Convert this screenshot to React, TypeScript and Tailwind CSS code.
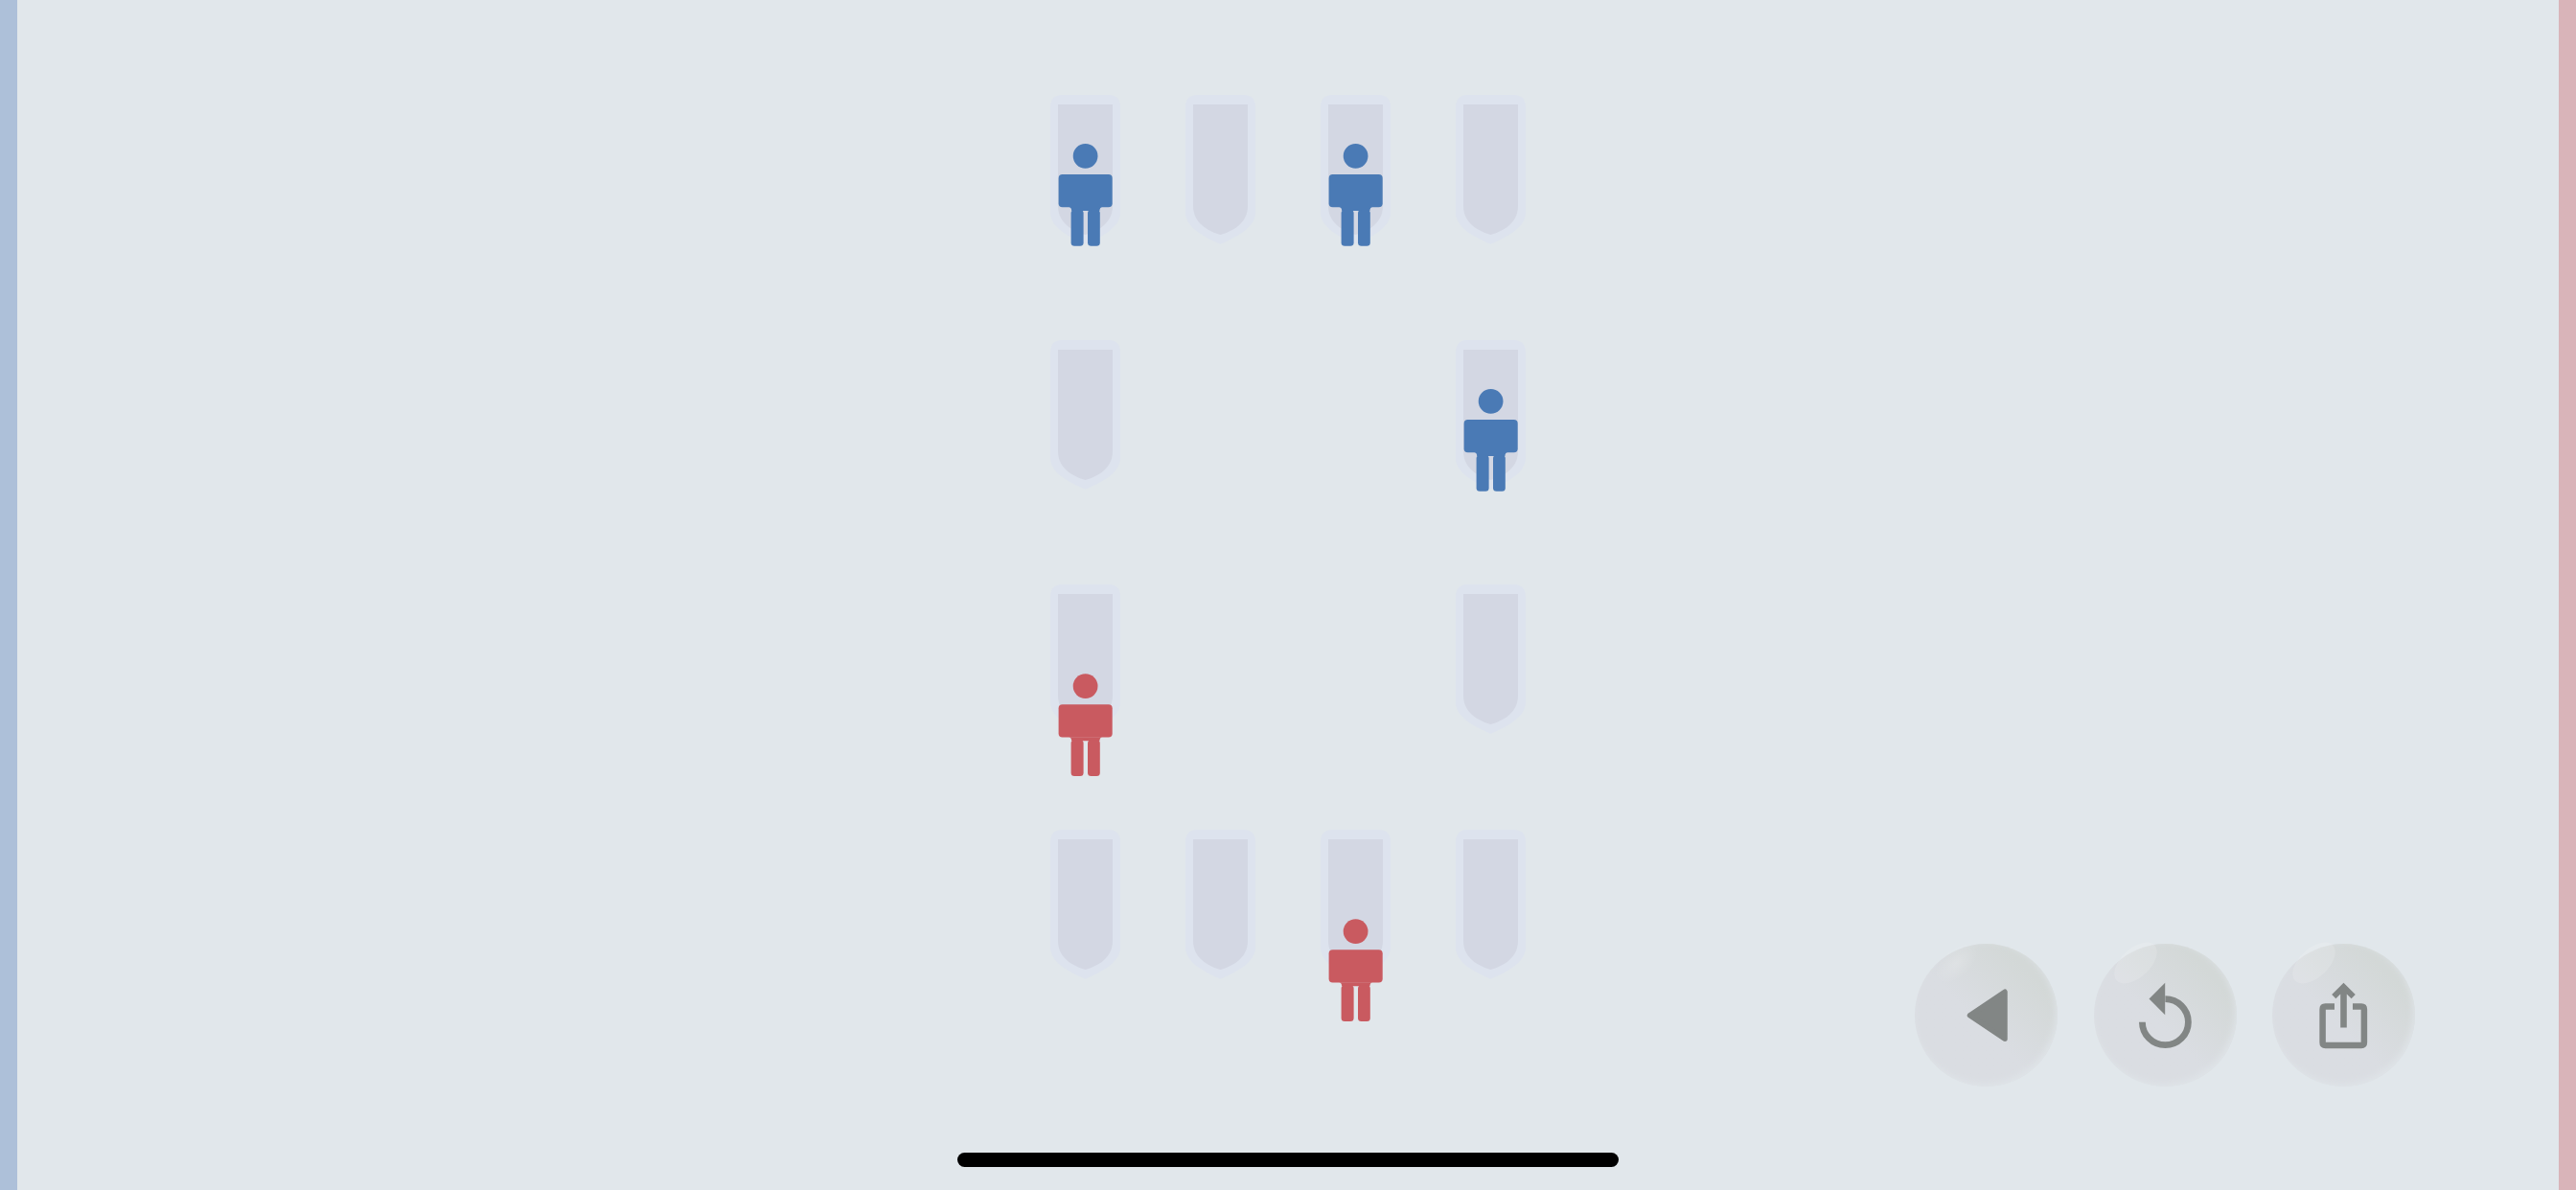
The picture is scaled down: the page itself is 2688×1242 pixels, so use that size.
import { FC, ReactNode } from "react";

type Occupant = "blue" | "red";

interface Stall {
  empty?: boolean;
  occupant?: Occupant;
}

const STALLS: Stall[] = [
  { occupant: "blue" },
  {},
  { occupant: "blue" },
  {},

  {},
  { empty: true },
  { empty: true },
  { occupant: "blue" },

  { occupant: "red" },
  { empty: true },
  { empty: true },
  {},

  {},
  {},
  { occupant: "red" },
  {},
];

// Red people stand one step further back from the wall
const Person: FC<{ type: Occupant }> = ({ type }) => (
  <g
    className={type === "blue" ? "fill-[#4a7ab5]" : "fill-[#c95a60]"}
    transform={type === "blue" ? undefined : "translate(0 42.3)"}
  >
    <circle cx="36.6" cy="63.8" r="12.9" />
    <rect x="8.6" y="83" width="56.1" height="34.3" rx="4" />
    <path d="M19.5 117 Q22 117.6 22.2 121 H51.4 Q51.6 117.6 54 117 Z" />
    <rect x="21.6" y="120" width="13" height="37.8" rx="3.5" />
    <rect x="39" y="120" width="12.8" height="37.8" rx="3.5" />
  </g>
);

const Urinal: FC<Stall> = ({ occupant }) => (
  <svg viewBox="0 0 73 156" className="h-[156px] w-[73px] overflow-visible">
    <path
      className="fill-[#dde3ee]"
      d="M11 0 H62 Q73 1 73 13 V123 C73 139 52 149 36.5 155.7 C21 149 0 139 0 123 V13 Q0 1 11 0 Z"
    />
    <path
      className="fill-[#d3d7e3]"
      d="M8 10 H65 V116 C65 134 49 142.5 36.5 146 C24 142.5 8 134 8 116 Z"
    />
    {occupant ? <Person type={occupant} /> : null}
  </svg>
);

interface RoundButtonProps {
  label: string;
  softShine?: boolean;
  children: ReactNode;
}

const RoundButton: FC<RoundButtonProps> = ({ label, softShine, children }) => (
  <button
    type="button"
    aria-label={label}
    className="relative size-[149px] shrink-0 rounded-full bg-linear-45 from-[#dadde2] from-45% to-[#d3d8d7] to-80% shadow-[inset_-2px_-3px_7px_#dfe4e8]"
  >
    <svg viewBox="0 0 149 149" className="size-full overflow-visible">
      <defs>
        <radialGradient id="shine">
          <stop offset="0" stopColor="#fff" stopOpacity="0.18" />
          <stop offset="1" stopColor="#fff" stopOpacity="0" />
        </radialGradient>
      </defs>
      <ellipse
        cx="43.5"
        cy="20"
        rx="27"
        ry="15"
        transform="rotate(-43 43.5 20)"
        fill={softShine ? "url(#shine)" : "#fff"}
        fillOpacity={softShine ? 1 : 0.14}
      />
      {children}
    </svg>
  </button>
);

export default function App() {
  return (
    <div className="relative flex h-[1242px] w-[2688px] overflow-hidden bg-[#e1e7eb]">
      <div className="w-[18px] shrink-0 bg-[#adc0d9]" />

      <main className="flex flex-1 justify-between pr-[150px] pl-[1078px]">
        <div className="mt-[99px] grid h-[923px] grid-cols-4 content-between gap-x-[68px]">
          {STALLS.map((stall, index) =>
            stall.empty ? (
              <div key={index} />
            ) : (
              <Urinal key={index} occupant={stall.occupant} />
            ),
          )}
        </div>

        <div className="mb-[108px] flex gap-[37.5px] self-end">
          <RoundButton label="Back" softShine>
            <path
              className="fill-[#828685] stroke-[#828685]"
              d="M57.5 74.7 L94 50.2 V99.2 Z"
              strokeWidth="5.5"
              strokeLinejoin="round"
            />
          </RoundButton>
          <RoundButton label="Restart">
            <path
              className="fill-none stroke-[#828685]"
              d="M50.4 81.7 A24 24 0 1 0 74.4 57.7"
              strokeWidth="6.8"
            />
            <path className="fill-[#828685]" d="M74.2 40.8 V74.2 L57.5 57.5 Z" />
          </RoundButton>
          <RoundButton label="Share">
            <path
              className="fill-none stroke-[#828685]"
              d="M65 65.6 H55.5 Q52.6 65.6 52.6 68.5 V103 Q52.6 105.9 55.5 105.9 H93 Q95.9 105.9 95.9 103 V68.5 Q95.9 65.6 93 65.6 H84"
              strokeWidth="6.5"
            />
            <path
              className="fill-[#828685]"
              d="M74.5 40.7 L86.8 53 L82.6 57.3 L77.8 52.6 V87.4 H71.2 V52.6 L66.4 57.3 L62.2 53 Z"
            />
          </RoundButton>
        </div>
      </main>

      <div className="w-[18px] shrink-0 bg-[#d9b4b9]" />

      <div className="absolute bottom-[24px] left-[999px] h-[15px] w-[690px] rounded-full bg-black" />
    </div>
  );
}
